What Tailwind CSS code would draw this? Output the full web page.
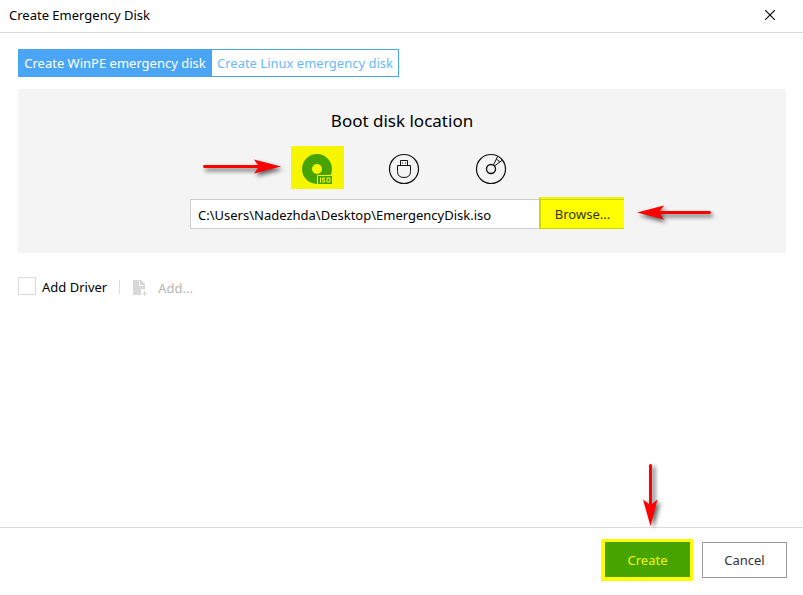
<!DOCTYPE html>
<html lang="en">
<head>
    <meta charset="UTF-8">
    <meta name="viewport" content="width=device-width, initial-scale=1.0">
    <title>Create Emergency Disk</title>
    <script src="https://cdn.jsdelivr.net/npm/@tailwindcss/browser@4"></script>
</head>
<body class="flex min-h-screen flex-col bg-white font-['Segoe_UI','Noto_Sans',sans-serif] text-[13px] leading-5 text-black">

    <!-- Title bar -->
    <header class="flex h-[33px] items-center justify-between border-b border-[#dcdcdc] pr-7 pb-[2px] pl-[9px]">
        <h1>Create Emergency Disk</h1>
        <button type="button" aria-label="Close" class="flex size-[10px] items-center justify-center">
            <svg class="size-[10px] shrink-0" viewBox="0 0 10 10" fill="none" stroke="#000" stroke-width="1.1">
                <path d="M0 0L10 10M10 0L0 10"/>
            </svg>
        </button>
    </header>

    <main class="flex-1 pt-4 pr-[17px] pl-[18px]">
        <!-- Disk type -->
        <div class="flex">
            <button type="button" class="h-7 w-[194px] bg-[#4aa6f5] whitespace-nowrap text-white">Create WinPE emergency disk</button>
            <button type="button" class="h-7 w-[187px] border border-l-0 border-[#4aa6f5] whitespace-nowrap text-[#6bb9fb]">Create Linux emergency disk</button>
        </div>

        <!-- Boot disk location -->
        <section class="mt-3 flex flex-col items-center bg-[#f4f4f4] pt-5 pb-6">
            <h2 class="text-[17px] leading-6">Boot disk location</h2>

            <div class="mt-[13px] flex gap-[34px] pl-[5px]">
                <div class="relative">
                    <button type="button" aria-label="ISO file" class="flex h-[43px] w-[53px] items-center justify-center bg-[#f6f600]">
                        <svg class="h-[43px] w-[53px]" viewBox="0 0 53 43">
                            <circle cx="26" cy="23" r="10" fill="none" stroke="#47a400" stroke-width="10"/>
                            <path d="M26 29h16v10H26z" fill="#f6f600"/>
                            <path d="M27 30h14v8H27z" fill="#47a400"/>
                            <path d="M29.500 31.500v5M34 32h-2.500v2h2v2h-2.500M36 32h3v4h-3z" fill="none" stroke="#f6f600" stroke-width="1"/>
                        </svg>
                    </button>
                    <svg class="absolute top-[10px] right-[61px] h-6 w-[84px] overflow-visible drop-shadow-[2px_3px_2px_rgba(0,0,0,0.6)]" viewBox="0 0 84 24" fill="#f00">
                        <path d="M5 9H59L55 3.500L82 10.500L55 17.500L59 12H5Q3 10.500 5 9z"/>
                    </svg>
                </div>
                <button type="button" aria-label="USB drive" class="flex h-[43px] w-[53px] items-center justify-center">
                    <svg class="h-[43px] w-[53px]" viewBox="0 0 53 43" fill="none" stroke="#111">
                        <circle cx="26" cy="23" r="14.500" stroke-width="1.200"/>
                        <path d="M19.500 19.500h13v6q0 6-6.500 6t-6.500-6zM22.500 19.500v-5h7v5"/>
                        <path d="M24 17h1M27 17h1"/>
                    </svg>
                </button>
                <button type="button" aria-label="CD or DVD" class="flex h-[43px] w-[53px] items-center justify-center">
                    <svg class="h-[43px] w-[53px]" viewBox="0 0 53 43" fill="none" stroke="#111">
                        <circle cx="26" cy="23" r="14.500" stroke-width="1.200"/>
                        <circle cx="26" cy="23" r="4.500" stroke-width="1.400"/>
                        <path d="M28.500 19L32.500 10.500M29.500 20L37.500 14M31.500 13.500q3 .5 3 3"/>
                    </svg>
                </button>
            </div>

            <div class="mt-2 flex items-end pl-[10px]">
                <input type="text" aria-label="Boot disk path" value="C:\Users\Nadezhda\Desktop\EmergencyDisk.iso" class="h-[30px] w-[349px] border border-r-0 border-[#cdcdcd] bg-white px-[7px] pt-px">
                <div class="relative">
                    <button type="button" class="block h-8 w-[85px] border-t-2 border-l-2 border-[#f4f400] border-l-[#d4d400] bg-[#f4f400]">
                        <span class="flex h-[30px] items-center justify-center border-t border-b border-[#d2d200] bg-[#ff0] text-[#333300]">Browse...</span>
                    </button>
                    <svg class="absolute top-[5px] left-[99px] h-6 w-[76px] overflow-visible drop-shadow-[2px_3px_2px_rgba(0,0,0,0.6)]" viewBox="0 0 76 24" fill="#f00">
                        <path d="M72 9H22L26 3.500L-1 10.500L26 17.500L22 12H72Q74 10.500 72 9z"/>
                    </svg>
                </div>
            </div>
        </section>

        <!-- Driver options -->
        <div class="mt-6 flex h-5 items-center">
            <input type="checkbox" id="addDriver" class="mb-[2px] size-[18px] appearance-none border border-[#dadada] bg-white checked:bg-[#4aa6f5]">
            <label for="addDriver" class="pl-[6px]">Add Driver</label>
            <span class="ml-3 h-[14px] w-px bg-[#dcdcdc]"></span>
            <button type="button" disabled class="flex items-center gap-[11px] pt-[2px] pl-[13px] text-[#b5b5b5]">
                <svg class="h-4 w-[14px]" viewBox="0 0 14 16" fill="#d8d8d8">
                    <path d="M0 0h8l4 4v5H8v6H0z"/>
                    <path d="M6.500 1v4.500h4" fill="none" stroke="#fff"/>
                    <path d="M11 10.500h1v2.500h2v1h-2v2h-1v-2H9v-1h2z"/>
                </svg>
                Add...
            </button>
        </div>
    </main>

    <!-- Actions -->
    <footer class="flex items-center justify-end gap-[9px] border-t border-[#dcdcdc] pt-[11px] pr-4 pb-[14px]">
        <div class="relative">
            <button type="button" class="block h-[42px] w-[92px] border-4 border-t-[3px] border-r-[3px] border-[#ff0] bg-[#47a400] text-[#f4f400]">Create</button>
            <svg class="absolute bottom-[55px] left-[42px] h-[64px] w-4 overflow-visible drop-shadow-[3px_2px_2px_rgba(0,0,0,0.6)]" viewBox="0 0 16 64" fill="#f00">
                <path d="M6 3V42L0 37.500L7.500 64L14.500 37.500L9 42V3Q7.500 1 6 3z"/>
            </svg>
        </div>
        <button type="button" class="h-9 w-[85px] border border-[#999] bg-white text-[#333]">Cancel</button>
    </footer>

</body>
</html>
